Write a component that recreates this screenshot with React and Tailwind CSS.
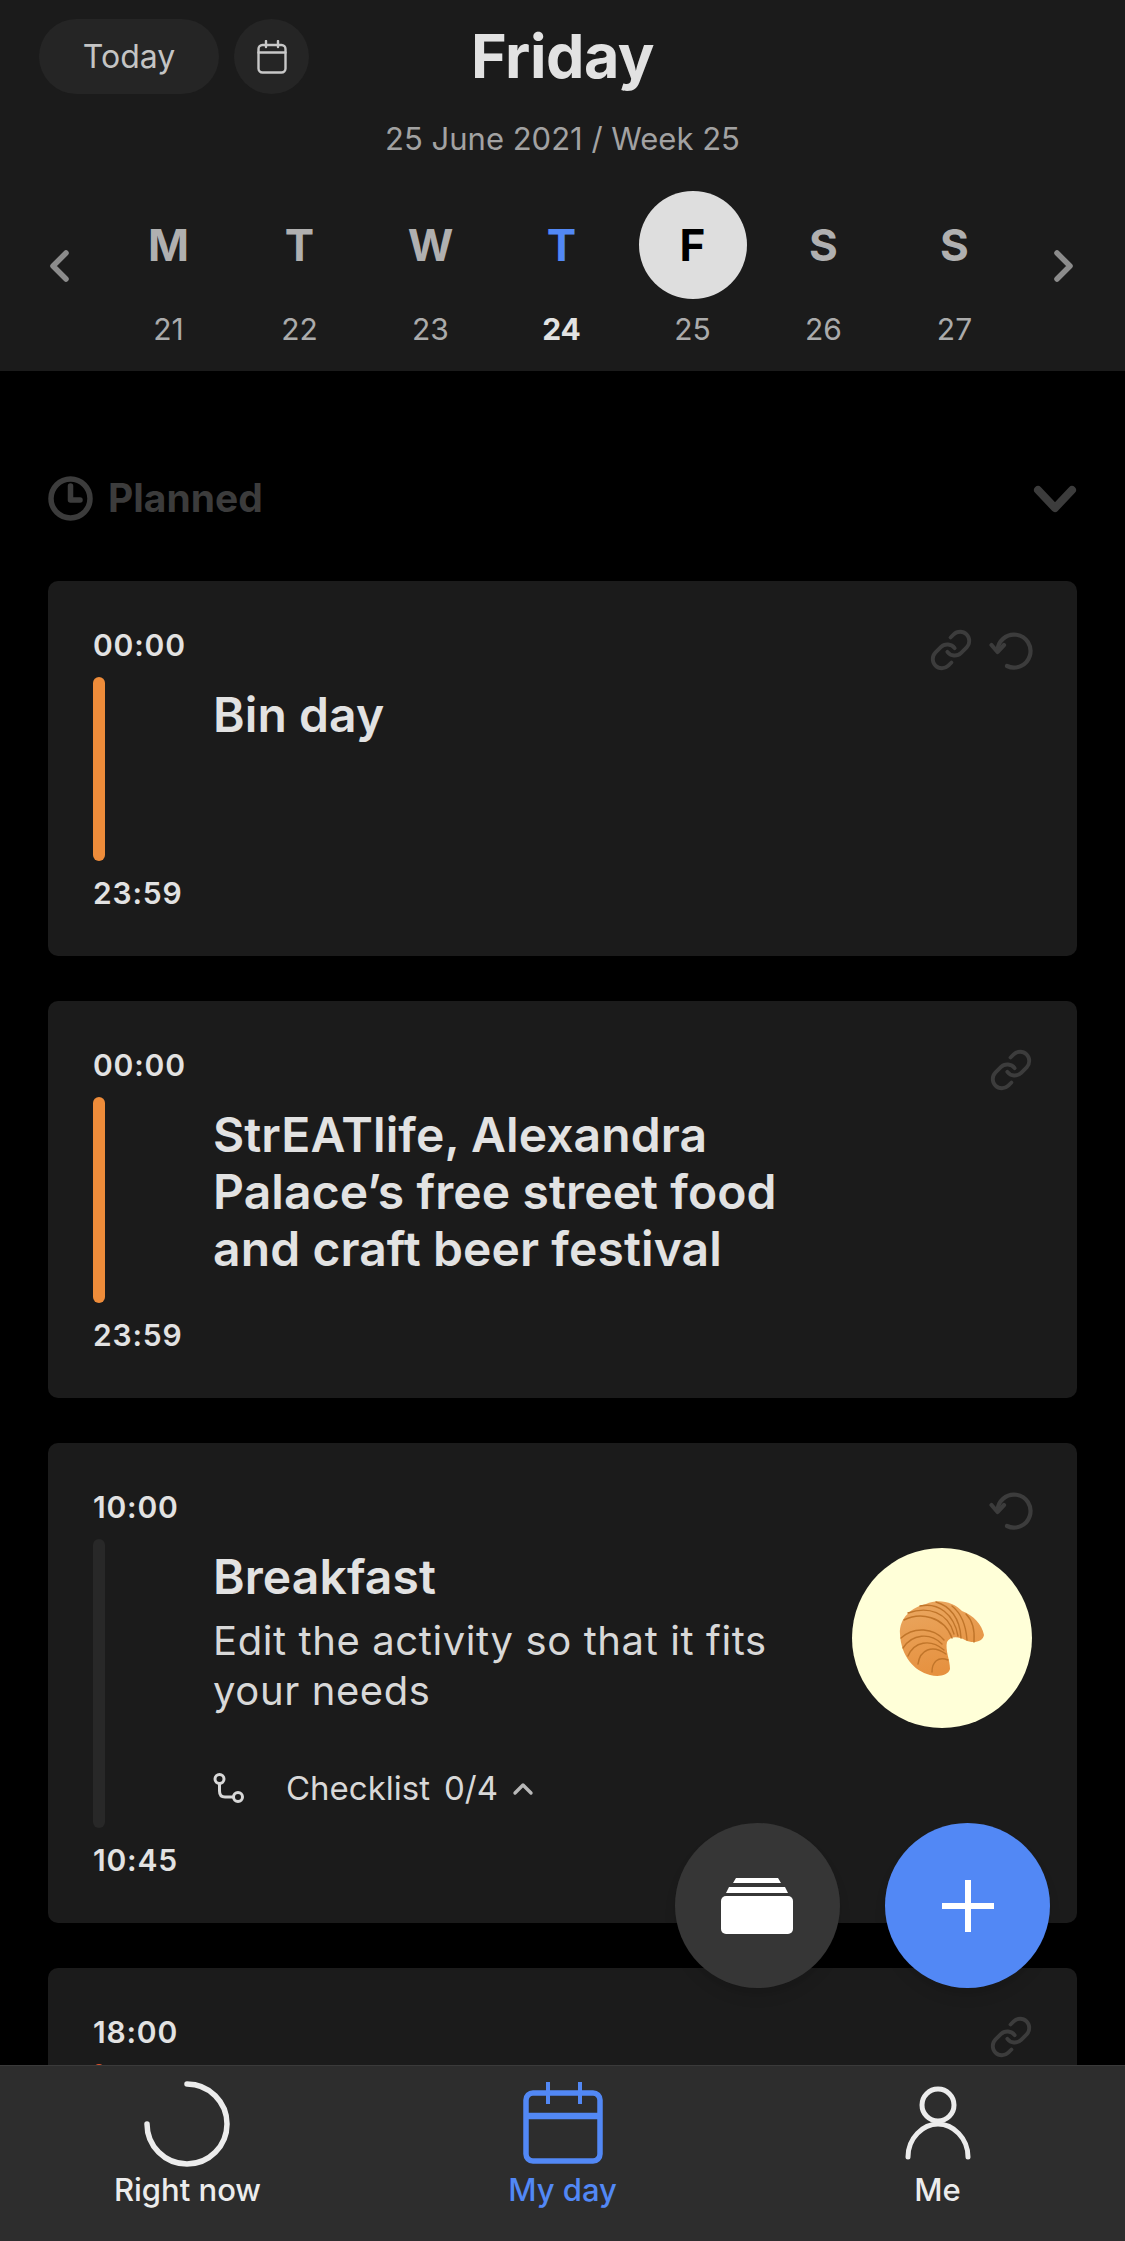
import { Link } from "lucide-react";

const days = [
  { letter: "M", num: 21 },
  { letter: "T", num: 22 },
  { letter: "W", num: 23 },
  { letter: "T", num: 24, today: true },
  { letter: "F", num: 25, selected: true },
  { letter: "S", num: 26 },
  { letter: "S", num: 27 },
];

function UndoIcon() {
  return (
    <svg width="44" height="40" viewBox="0 0 44 40" fill="none" stroke="#3c3c3c" strokeWidth="4.2" strokeLinecap="round" strokeLinejoin="round">
      <path d="M8.5 21 A16.5 16.5 0 1 1 18 36" />
      <path d="M2.5 15 L8.5 22 L15 15" />
    </svg>
  );
}

function ChainIcon() {
  return <Link size={44} color="#3c3c3c" strokeWidth={2.1} />;
}

function Chevron({ dir }) {
  return (
    <svg width="22" height="32" viewBox="0 0 22 32" fill="none" stroke="#8c8c8c" strokeWidth="5.5" strokeLinecap="round" strokeLinejoin="round">
      <path d={dir === "left" ? "M18 3 L5 16 L18 29" : "M4 3 L17 16 L4 29"} />
    </svg>
  );
}

function Croissant() {
  return (
    <svg width="88" height="80" viewBox="68 72 88 80">
      <defs>
        <linearGradient id="cr" x1="0" y1="0" x2="0.3" y2="1">
          <stop offset="0" stopColor="#eaa862" />
          <stop offset="1" stopColor="#e6913f" />
        </linearGradient>
      </defs>
      <path d="M70 108 C69 92 82 81 96 78 C108 72 124 76 132 85 C143 89 152 98 154 109 C153 116 143 118 135 114 C128 110 120 110 117 116 C115 124 120 134 120 143 C118 150 108 151 100 149 C84 145 71 130 70 108 Z" fill="url(#cr)" />
      <g fill="none" stroke="#c0752a" strokeWidth="1.4" strokeLinecap="round">
        <path d="M74 94 C90 86 114 90 122 112" />
        <path d="M78 87 C98 80 118 86 124 108" />
        <path d="M90 80 C108 76 124 88 128 110" />
        <path d="M106 76 C120 80 130 92 131 112" />
        <path d="M122 80 C132 88 136 100 137 114" />
        <path d="M136 88 C142 94 145 104 144 116" />
        <path d="M71 112 C84 100 104 102 114 114" />
        <path d="M73 122 C82 108 100 106 112 118" />
        <path d="M78 130 C84 116 100 112 114 124" />
        <path d="M88 138 C90 124 102 118 116 128" />
        <path d="M102 146 C102 136 108 130 118 134" />
      </g>
    </svg>
  );
}

function Card({ height, start, end, barColor, title, icons, children, right }) {
  return (
    <div className={`relative flex shrink-0 rounded-[10px] bg-[#1b1b1b] ${height}`}>
      <div className="flex h-full w-[166px] shrink-0 flex-col pb-[43px] pl-[45px] pt-[44px]">
        <div className="text-[30px] font-semibold leading-[40px] tracking-[0.8px] text-[#e2e2e2]">{start}</div>
        <div className={`my-[12px] w-[12px] flex-1 rounded-full ${barColor}`}></div>
        <div className="text-[30px] font-semibold leading-[40px] tracking-[0.8px] text-[#e2e2e2]">{end}</div>
      </div>
      <div className="-ml-[1px] w-[600px] pt-[105px]">
        <div className="text-[48px] font-semibold leading-[57px] tracking-[0.1px] text-[#e2e2e2]">{title}</div>
        {children}
      </div>
      {right}
      <div className="absolute right-[44px] top-[47px] flex items-center gap-[16px]">{icons}</div>
    </div>
  );
}

export default function App() {
  return (
    <div className="relative flex h-[2241px] w-[1125px] flex-col overflow-hidden bg-black font-['Inter',sans-serif]">
      {/* Header */}
      <div className="h-[371px] shrink-0 bg-[#1b1b1b]">
        <div className="grid grid-cols-[1fr_auto_1fr] items-center px-[39px] pt-[19px]">
          <div className="flex items-center gap-[15px]">
            <div className="flex h-[75px] w-[180px] items-center justify-center rounded-full bg-[#252525] text-[32px] text-[#c4c4c4]">Today</div>
            <div className="flex h-[75px] w-[75px] items-center justify-center rounded-full bg-[#252525]">
              <svg width="30" height="34" viewBox="0 0 30 34" fill="none" stroke="#c8c8c8" strokeWidth="2.4" strokeLinecap="round">
                <rect x="1.5" y="5" width="27" height="27.5" rx="4" />
                <path d="M1.5 12.5 H28.5 M9 1 V7 M21 1 V7" />
              </svg>
            </div>
          </div>
          <div className="text-[61px] font-bold leading-[75px] tracking-[-0.5px] text-[#e2e2e2]">Friday</div>
          <div></div>
        </div>
        <div className="mt-[25px] text-center text-[31px] leading-[40px] text-[#a2a2a2]">25 June 2021 / Week 25</div>
        <div className="mt-[32px] grid grid-cols-[103px_repeat(7,131px)_105px]">
          <div className="flex h-[108px] items-end pl-[48px]">
            <div className="translate-y-[-17px]"><Chevron dir="left" /></div>
          </div>
          {days.map((d, i) => (
            <div key={i} className="flex flex-col items-center">
              <div
                className={`flex h-[108px] w-[108px] items-center justify-center rounded-full text-[44px] font-bold ${
                  d.selected ? "bg-[#dedede] text-black" : d.today ? "text-[#5288f5]" : "text-[#b0b0b0]"
                }`}
              >
                {d.letter}
              </div>
              <div className={`mt-[10px] text-[30px] leading-[40px] ${d.today ? "font-bold text-[#e2e2e2]" : "text-[#ababab]"}`}>{d.num}</div>
            </div>
          ))}
          <div className="flex h-[108px] items-end justify-end pr-[50px]">
            <div className="translate-y-[-17px]"><Chevron dir="right" /></div>
          </div>
        </div>
      </div>

      {/* Scrolling list */}
      <div className="flex min-h-0 flex-1 flex-col overflow-hidden px-[48px] pt-[105px]">
        <div className="flex h-[45px] shrink-0 items-center justify-between">
          <div className="flex items-center gap-[15px]">
            <svg width="45" height="45" viewBox="0 0 45 45" fill="none" stroke="#3c3c3c" strokeWidth="5.5" strokeLinecap="round" strokeLinejoin="round">
              <circle cx="22.5" cy="22.5" r="19.5" />
              <path d="M22.5 10 V24 H32" />
            </svg>
            <div className="text-[39px] font-bold text-[#3c3c3c]">Planned</div>
          </div>
          <svg width="44" height="28" viewBox="0 0 44 28" fill="none" stroke="#3c3c3c" strokeWidth="8" strokeLinecap="round" strokeLinejoin="round">
            <path d="M5 5 L22 23 L39 5" />
          </svg>
        </div>
        <div className="mt-[60px] flex flex-col gap-[45px]">
          <Card
            height="h-[375px]"
            start="00:00"
            end="23:59"
            barColor="bg-[#ee8c3a]"
            title="Bin day"
            icons={
              <>
                <ChainIcon />
                <UndoIcon />
              </>
            }
          />
          <Card
            height="h-[397px]"
            start="00:00"
            end="23:59"
            barColor="bg-[#ee8c3a]"
            title="StrEATlife, Alexandra Palace’s free street food and craft beer festival"
            icons={<ChainIcon />}
          />
          <Card
            height="h-[480px]"
            start="10:00"
            end="10:45"
            barColor="bg-[#282828]"
            title="Breakfast"
            icons={<UndoIcon />}
            right={
              <div className="ml-auto pr-[45px] pt-[105px]">
                <div className="flex h-[180px] w-[180px] items-center justify-center rounded-full bg-[#ffffd8]">
                  <Croissant />
                </div>
              </div>
            }
          >
            <div className="mt-[11px] text-[40px] leading-[50px] tracking-[0.6px] text-[#d8d8d8]">Edit the activity so that it fits your needs</div>
            <div className="mt-[53px] flex h-[40px] items-center text-[33px] text-[#d8d8d8]">
              <svg width="32" height="32" viewBox="0 0 32 32" fill="none" stroke="#d8d8d8" strokeWidth="3" className="mr-[41px]">
                <circle cx="6.5" cy="6" r="4.5" />
                <circle cx="25" cy="24" r="4.5" />
                <path d="M6.5 10.5 V18 Q6.5 24 12 24 H20.5" />
              </svg>
              <span>Checklist</span>
              <span className="ml-[14px]">0/4</span>
              <svg width="22" height="14" viewBox="0 0 22 14" fill="none" stroke="#b8b8b8" strokeWidth="3.4" strokeLinecap="round" strokeLinejoin="round" className="ml-[14px]">
                <path d="M3 11 L11 3 L19 11" />
              </svg>
            </div>
          </Card>
          <Card height="h-[375px]" start="18:00" end="" barColor="bg-[#e2552e]" title="" icons={<ChainIcon />} />
        </div>
      </div>

      {/* Floating buttons */}
      <div className="absolute left-[675px] top-[1823px] flex gap-[45px]">
        <div className="flex h-[165px] w-[165px] items-center justify-center rounded-full bg-[#363636] shadow-lg">
          <svg width="72" height="56" viewBox="0 0 72 56" fill="white" className="-translate-x-[1px]">
            <path d="M15 0 H57 L60 5 H12 Z" />
            <path d="M8 9 H64 L67 15 H5 Z" />
            <rect x="0" y="18" width="72" height="38" rx="5" />
          </svg>
        </div>
        <div className="flex h-[165px] w-[165px] items-center justify-center rounded-full bg-[#5288f5] shadow-lg">
          <svg width="52" height="52" viewBox="0 0 52 52" stroke="white" strokeWidth="6">
            <path d="M26 0 V52 M0 26 H52" />
          </svg>
        </div>
      </div>

      {/* Bottom nav */}
      <div className="relative grid h-[176px] shrink-0 grid-cols-3 border-t border-[#3a3a3a] bg-[#2d2d2d]">
        <div className="flex flex-col items-center pt-[14px]">
          <svg width="90" height="90" viewBox="0 0 90 90" fill="none" stroke="#ececec" strokeWidth="5.5" strokeLinecap="round">
            <path d="M44 4 A40 40 0 1 1 4 44" />
          </svg>
          <div className="text-[31px] font-medium leading-[40px] text-[#ececec]">Right now</div>
        </div>
        <div className="flex flex-col items-center pt-[14px]">
          <svg width="90" height="90" viewBox="0 0 90 90" fill="none" stroke="#5288f5" strokeWidth="5.5" strokeLinejoin="round">
            <rect x="8" y="13" width="74" height="68" rx="7" />
            <path d="M8 36 H82" strokeWidth="6.5" />
            <path d="M30 2 V24 M62 2 V24" strokeWidth="4" />
          </svg>
          <div className="text-[31px] font-medium leading-[40px] text-[#5288f5]">My day</div>
        </div>
        <div className="flex flex-col items-center pt-[14px]">
          <svg width="90" height="90" viewBox="0 0 90 90" fill="none" stroke="#ececec" strokeWidth="5" strokeLinecap="round">
            <circle cx="45" cy="25" r="16" />
            <path d="M15 77 C15 58 30 44 45 44 C60 44 75 58 75 77" />
          </svg>
          <div className="text-[31px] font-medium leading-[40px] text-[#ececec]">Me</div>
        </div>
      </div>
    </div>
  );
}
